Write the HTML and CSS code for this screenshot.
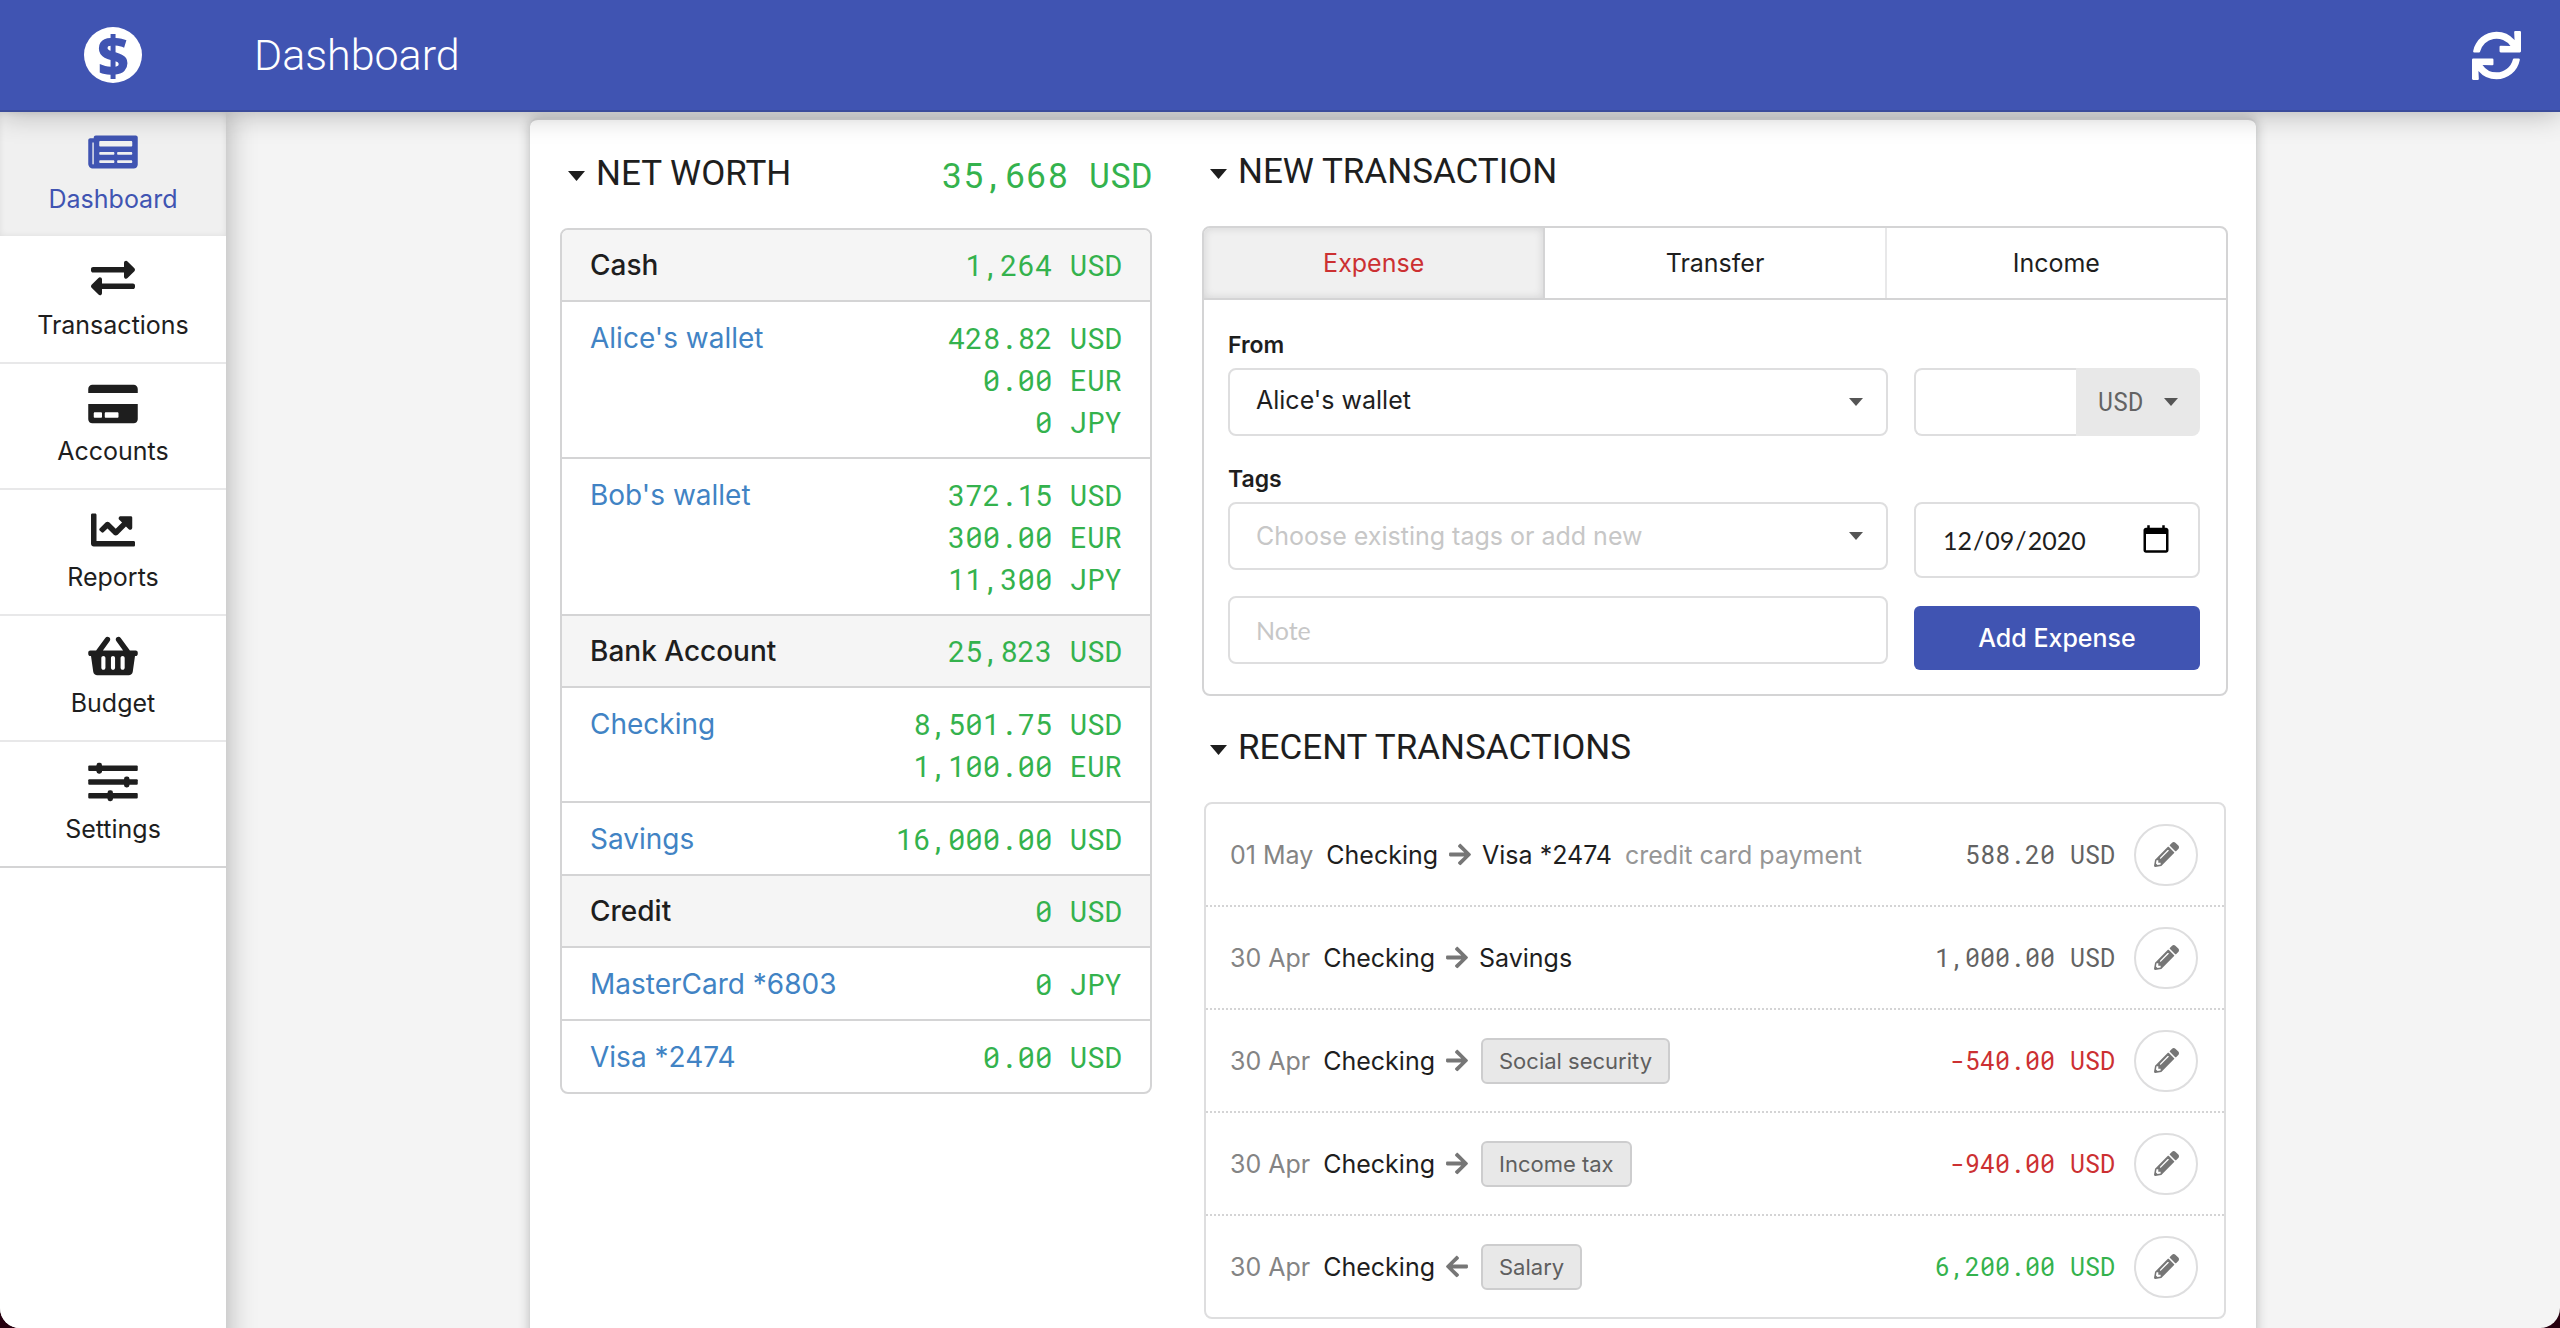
FILE: index.html
```html
<!DOCTYPE html>
<html lang="en">
<head>
<meta charset="utf-8">
<title>Dashboard</title>
<link rel="stylesheet" href="styles.css">
</head>
<body>
<svg class="sprite" aria-hidden="true">
  <symbol id="i-right" viewBox="0 0 448 512"><path d="M190.5 66.9l22.2-22.2c9.4-9.4 24.6-9.4 33.9 0L441 239c9.4 9.4 9.4 24.6 0 33.9L246.6 467.3c-9.4 9.4-24.6 9.4-33.9 0l-22.2-22.2c-9.5-9.5-9.3-25 .4-34.3L311.4 296H24c-13.3 0-24-10.7-24-24v-32c0-13.3 10.7-24 24-24h287.4L190.9 101.2c-9.8-9.3-10-24.8-.4-34.3z"/></symbol>
  <symbol id="i-pencil" viewBox="0 0 512 512"><path d="M497.9 142.1l-46.1 46.1c-4.7 4.7-12.3 4.7-17 0l-111-111c-4.7-4.7-4.7-12.3 0-17l46.1-46.1c18.7-18.7 49.1-18.7 67.9 0l60.1 60.1c18.8 18.7 18.8 49.1 0 67.9zM284.2 99.8L21.6 362.4.4 483.9c-2.9 16.4 11.4 30.6 27.8 27.8l121.5-21.3 262.6-262.6c4.7-4.7 4.7-12.3 0-17l-111-111c-4.8-4.7-12.4-4.7-17.1 0zM124.1 339.9c-5.5-5.5-5.5-14.3 0-19.8l154-154c5.5-5.5 14.3-5.5 19.8 0s5.5 14.3 0 19.8l-154 154c-5.5 5.5-14.3 5.5-19.8 0zM88 424h48v36.3l-64.5 11.3-31.1-31.1L51.7 376H88v48z"/></symbol>
</svg>

<header class="topbar">
  <a class="logo" href="#" aria-label="Home">$</a>
  <h1 class="title">Dashboard</h1>
  <button class="sync" type="button" aria-label="Sync">
    <svg viewBox="0 0 512 512"><path d="M440.65 12.57l4 82.77A247.16 247.16 0 0 0 255.83 8C134.73 8 33.91 94.92 12.29 209.82A12 12 0 0 0 24.09 224h49.05a12 12 0 0 0 11.67-9.26 175.91 175.91 0 0 1 317-56.94l-101.46-4.86a12 12 0 0 0-12.57 12v47.41a12 12 0 0 0 12 12H500a12 12 0 0 0 12-12V12a12 12 0 0 0-12-12h-47.37a12 12 0 0 0-11.98 12.57zM255.83 432a175.61 175.61 0 0 1-146-77.8l101.8 4.87a12 12 0 0 0 12.57-12v-47.4a12 12 0 0 0-12-12H12a12 12 0 0 0-12 12V500a12 12 0 0 0 12 12h47.35a12 12 0 0 0 12-12.6l-4.15-82.57A247.17 247.17 0 0 0 255.83 504c121.11 0 221.93-86.92 243.55-201.82a12 12 0 0 0-11.8-14.18h-49.05a12 12 0 0 0-11.67 9.26A175.86 175.86 0 0 1 255.83 432z"/></svg>
  </button>
</header>

<div class="layout">
  <nav class="sidebar">
    <a class="nav-item active" href="#">
      <svg viewBox="0 0 576 512"><path d="M552 64H88c-13.255 0-24 10.745-24 24v8H24c-13.255 0-24 10.745-24 24v272c0 30.928 25.072 56 56 56h472c26.51 0 48-21.49 48-48V88c0-13.255-10.745-24-24-24zM56 400a8 8 0 0 1-8-8V144h16v248a8 8 0 0 1-8 8zm236-16H140c-6.627 0-12-5.373-12-12v-8c0-6.627 5.373-12 12-12h152c6.627 0 12 5.373 12 12v8c0 6.627-5.373 12-12 12zm208 0H348c-6.627 0-12-5.373-12-12v-8c0-6.627 5.373-12 12-12h152c6.627 0 12 5.373 12 12v8c0 6.627-5.373 12-12 12zm-208-96H140c-6.627 0-12-5.373-12-12v-8c0-6.627 5.373-12 12-12h152c6.627 0 12 5.373 12 12v8c0 6.627-5.373 12-12 12zm208 0H348c-6.627 0-12-5.373-12-12v-8c0-6.627 5.373-12 12-12h152c6.627 0 12 5.373 12 12v8c0 6.627-5.373 12-12 12zm0-96H140c-6.627 0-12-5.373-12-12v-40c0-6.627 5.373-12 12-12h360c6.627 0 12 5.373 12 12v40c0 6.627-5.373 12-12 12z"/></svg>
      Dashboard
    </a>
    <a class="nav-item" href="#">
      <svg viewBox="0 0 512 512"><path d="M0 168v-16c0-13.255 10.745-24 24-24h360V80c0-21.367 25.899-32.042 40.971-16.971l80 80c9.372 9.373 9.372 24.569 0 33.941l-80 80C409.956 271.982 384 261.456 384 240v-48H24c-13.255 0-24-10.745-24-24zm488 152H128v-48c0-21.314-25.862-32.08-40.971-16.971l-80 80c-9.372 9.373-9.372 24.569 0 33.941l80 80C102.057 463.997 128 453.437 128 432v-48h360c13.255 0 24-10.745 24-24v-16c0-13.255-10.745-24-24-24z"/></svg>
      Transactions
    </a>
    <a class="nav-item" href="#">
      <svg viewBox="0 0 576 512"><path d="M0 432c0 26.5 21.5 48 48 48h480c26.5 0 48-21.5 48-48V256H0v176zm192-68c0-6.6 5.4-12 12-12h136c6.6 0 12 5.4 12 12v40c0 6.6-5.4 12-12 12H204c-6.6 0-12-5.4-12-12v-40zm-128 0c0-6.6 5.4-12 12-12h72c6.6 0 12 5.4 12 12v40c0 6.6-5.4 12-12 12H76c-6.6 0-12-5.4-12-12v-40zM576 80v48H0V80c0-26.5 21.5-48 48-48h480c26.5 0 48 21.5 48 48z"/></svg>
      Accounts
    </a>
    <a class="nav-item" href="#">
      <svg viewBox="0 0 512 512"><path d="M496 384H64V80c0-8.84-7.16-16-16-16H16C7.16 64 0 71.16 0 80v336c0 17.67 14.33 32 32 32h464c8.84 0 16-7.16 16-16v-32c0-8.84-7.16-16-16-16zM464 96H345.94c-21.38 0-32.09 25.85-16.97 40.97l32.4 32.4L288 242.75l-73.37-73.37c-12.5-12.5-32.76-12.5-45.25 0l-68.69 68.69c-6.25 6.25-6.25 16.38 0 22.63l22.62 22.62c6.25 6.25 16.38 6.25 22.63 0L192 237.25l73.37 73.37c12.5 12.5 32.76 12.5 45.25 0l96-96 32.4 32.4c15.12 15.12 40.97 4.41 40.97-16.97V112c.01-8.84-7.15-16-15.99-16z"/></svg>
      Reports
    </a>
    <a class="nav-item" href="#">
      <svg viewBox="0 0 576 512"><path d="M576 216v16c0 13.255-10.745 24-24 24h-8l-26.113 182.788C514.509 462.435 494.257 480 470.37 480H105.63c-23.887 0-44.139-17.565-47.518-41.212L32 256h-8c-13.255 0-24-10.745-24-24v-16c0-13.255 10.745-24 24-24h67.341l106.78-146.821c10.395-14.292 30.407-17.453 44.701-7.058 14.293 10.395 17.453 30.408 7.058 44.701L170.477 192h235.046L326.12 82.821c-10.395-14.292-7.234-34.306 7.059-44.701 14.291-10.395 34.306-7.235 44.701 7.058L484.659 192H552c13.255 0 24 10.745 24 24zM312 392V280c0-13.255-10.745-24-24-24s-24 10.745-24 24v112c0 13.255 10.745 24 24 24s24-10.745 24-24zm112 0V280c0-13.255-10.745-24-24-24s-24 10.745-24 24v112c0 13.255 10.745 24 24 24s24-10.745 24-24zm-224 0V280c0-13.255-10.745-24-24-24s-24 10.745-24 24v112c0 13.255 10.745 24 24 24s24-10.745 24-24z"/></svg>
      Budget
    </a>
    <a class="nav-item last" href="#">
      <svg viewBox="0 0 576 512"><rect y="64" width="576" height="64" rx="12"/><rect y="224" width="576" height="64" rx="12"/><rect y="384" width="576" height="64" rx="12"/><rect x="96" y="32" width="64" height="128" rx="28"/><rect x="416" y="192" width="64" height="128" rx="28"/><rect x="224" y="352" width="64" height="128" rx="28"/></svg>
      Settings
    </a>
  </nav>

  <main class="content">
    <div class="card">
      <section class="networth">
        <h2 class="heading"><span class="caret big"></span>NET WORTH<span class="money total">35,668 USD</span></h2>
        <ul class="accounts">
          <li class="group"><span>Cash</span><span class="money">1,264 USD</span></li>
          <li><a href="#">Alice's wallet</a><span class="money">428.82 USD<br>0.00 EUR<br>0 JPY</span></li>
          <li><a href="#">Bob's wallet</a><span class="money">372.15 USD<br>300.00 EUR<br>11,300 JPY</span></li>
          <li class="group"><span>Bank Account</span><span class="money">25,823 USD</span></li>
          <li><a href="#">Checking</a><span class="money">8,501.75 USD<br>1,100.00 EUR</span></li>
          <li><a href="#">Savings</a><span class="money">16,000.00 USD</span></li>
          <li class="group"><span>Credit</span><span class="money">0 USD</span></li>
          <li><a href="#">MasterCard *6803</a><span class="money">0 JPY</span></li>
          <li><a href="#">Visa *2474</a><span class="money">0.00 USD</span></li>
        </ul>
      </section>

      <div class="side">
        <section>
          <h2 class="heading"><span class="caret big"></span>NEW TRANSACTION</h2>
          <form class="form">
            <div class="tabs">
              <button class="tab active" type="button">Expense</button>
              <button class="tab" type="button">Transfer</button>
              <button class="tab" type="button">Income</button>
            </div>
            <div class="fields">
              <div class="field">
                <label for="from">From</label>
                <div class="picker">
                  <select id="from" class="control account"><option>Alice's wallet</option></select>
                  <span class="caret"></span>
                </div>
              </div>
              <div class="amount">
                <input class="control" type="text" aria-label="Amount">
                <div class="picker">
                  <select class="currency" aria-label="Currency"><option>USD</option></select>
                  <span class="caret"></span>
                </div>
              </div>
              <div class="field">
                <label for="tags">Tags</label>
                <div class="picker">
                  <input id="tags" class="control" type="text" placeholder="Choose existing tags or add new">
                  <span class="caret"></span>
                </div>
                <input class="control note" type="text" placeholder="Note" aria-label="Note">
              </div>
              <div class="actions">
                <input class="control date" type="date" value="2020-12-09" aria-label="Date">
                <button class="submit" type="submit">Add Expense</button>
              </div>
            </div>
          </form>
        </section>

        <section>
          <h2 class="heading recent"><span class="caret big"></span>RECENT TRANSACTIONS</h2>
          <ul class="transactions">
            <li>
              <time>01 May</time><span>Checking</span><svg class="arrow"><use href="#i-right"/></svg><span>Visa *2474</span><span class="memo">credit card payment</span>
              <span class="money neutral">588.20 USD</span>
              <button class="edit" type="button" aria-label="Edit"><svg><use href="#i-pencil"/></svg></button>
            </li>
            <li>
              <time>30 Apr</time><span>Checking</span><svg class="arrow"><use href="#i-right"/></svg><span>Savings</span>
              <span class="money neutral">1,000.00 USD</span>
              <button class="edit" type="button" aria-label="Edit"><svg><use href="#i-pencil"/></svg></button>
            </li>
            <li>
              <time>30 Apr</time><span>Checking</span><svg class="arrow"><use href="#i-right"/></svg><span class="tag">Social security</span>
              <span class="money negative">-540.00 USD</span>
              <button class="edit" type="button" aria-label="Edit"><svg><use href="#i-pencil"/></svg></button>
            </li>
            <li>
              <time>30 Apr</time><span>Checking</span><svg class="arrow"><use href="#i-right"/></svg><span class="tag">Income tax</span>
              <span class="money negative">-940.00 USD</span>
              <button class="edit" type="button" aria-label="Edit"><svg><use href="#i-pencil"/></svg></button>
            </li>
            <li>
              <time>30 Apr</time><span>Checking</span><svg class="arrow back"><use href="#i-right"/></svg><span class="tag">Salary</span>
              <span class="money">6,200.00 USD</span>
              <button class="edit" type="button" aria-label="Edit"><svg><use href="#i-pencil"/></svg></button>
            </li>
          </ul>
        </section>
      </div>
    </div>
  </main>
</div>
</body>
</html>
```
FILE: styles.css
```css
* { box-sizing: border-box; }

html { overflow: hidden; background: #26000f; }

body {
  margin: 0;
  height: 100vh;
  overflow: hidden;
  display: flex;
  flex-direction: column;
  border-radius: 0 0 20px 20px;
  background: #f4f4f4;
  color: #1e1e1e;
  font: 25px/34px Inter, "Liberation Sans", sans-serif;
}

a { color: #4183c4; text-decoration: none; }
h1, h2, ul { margin: 0; padding: 0; font-weight: 400; list-style: none; }
button, input, select { margin: 0; font: inherit; color: inherit; }
button { padding: 0; border: 0; background: none; cursor: pointer; }
svg { fill: currentColor; }
.sprite { display: none; }

/* Top bar */
.topbar {
  position: relative;
  z-index: 2;
  flex: none;
  display: flex;
  align-items: center;
  height: 112px;
  padding: 0 39px 0 84px;
  background: #4054b2;
  border-bottom: 2px solid #3b4c9b;
  color: #fff;
  box-shadow: 0 0 28px rgba(0, 0, 0, .3);
}
.logo {
  display: flex;
  align-items: center;
  justify-content: center;
  width: 58px;
  height: 56px;
  border-radius: 50%;
  background: #fff;
  color: #4054b2;
  font: 800 54px/56px "Open Sans", sans-serif;
}
.title {
  margin-left: 112px;
  font: 300 43px/56px Roboto, sans-serif;
}
.sync { margin-left: auto; height: 49px; }
.sync svg { display: block; width: 49px; height: 49px; }

.layout { flex: 1; display: flex; min-height: 0; }

/* Sidebar */
.sidebar {
  flex: none;
  width: 226px;
  margin-bottom: -30px;
  background: #fff;
  box-shadow: 0 0 28px rgba(0, 0, 0, .3);
}
.nav-item {
  display: flex;
  flex-direction: column;
  align-items: center;
  gap: 8px;
  padding: 18px 0 20px;
  border-bottom: 2px solid #e8e8e9;
  color: #1e1e1e;
}
.nav-item svg { width: 50px; height: 44px; }
.nav-item.active {
  background: #f0f0f0 padding-box;
  border-color: #fff;
  color: #4054b2;
  box-shadow: inset 0 0 6px rgba(0, 0, 0, .08);
}
.nav-item.last { border-color: #d4d4d5; }

/* Main card */
.content { flex: 1; display: flex; justify-content: center; padding-top: 6px; }
.card {
  display: flex;
  gap: 50px;
  width: 100%;
  max-width: 1726px;
  margin-bottom: -30px;
  padding: 24px 28px 28px 30px;
  background: #fff;
  border: solid #d4d4d5;
  border-width: 2px 0 0;
  border-radius: 8px;
  box-shadow: 0 0 12px rgba(34, 36, 38, .3);
}
.networth { flex: 592; padding-top: 2px; }
.side { flex: 1026; }

.heading {
  display: flex;
  align-items: center;
  padding: 8px 0 34px 8px;
  font: 35px/40px Roboto, sans-serif;
}
.heading.recent { padding-top: 32px; }

.caret {
  width: 14px;
  height: 8px;
  background: #555;
  clip-path: polygon(0 0, 100% 0, 50% 100%);
}
.caret.big {
  width: 17px;
  height: 10px;
  margin: 4px 11px 0 0;
  background: #1e1e1e;
}

.money {
  font-family: "Roboto Mono", "DejaVu Sans Mono", monospace;
  color: #34b24d;
  text-align: right;
}
.total { margin-left: auto; }
.neutral { color: #636363; }
.negative { color: #cc3032; }

/* Account list */
.accounts {
  border: 2px solid #d4d4d5;
  border-radius: 8px;
  font-size: 28px;
  line-height: 42px;
}
.accounts li {
  display: flex;
  justify-content: space-between;
  padding: 15px 28px 14px;
  border-bottom: 2px solid #d4d4d5;
}
.accounts li:last-child { border-bottom: 0; }
.accounts .group { padding-top: 14px; background: #f5f5f5; font-weight: 500; }
.accounts .group:first-child { border-radius: 6px 6px 0 0; }
.accounts .group .money { font-weight: 400; }
.accounts .money { font-size: 29px; }

/* New transaction form */
.form { border: 2px solid #d4d4d5; border-radius: 8px; overflow: hidden; }
.tabs { display: flex; border-bottom: 2px solid #d4d4d5; }
.tab { flex: 1; height: 70px; border-right: 2px solid #e8e8e9; }
.tab:last-child { border-right: 0; }
.tab.active {
  background: #f0f0f0;
  border-color: #d4d4d5;
  color: #cc3032;
  box-shadow: inset 0 0 8px rgba(34, 36, 38, .15);
}
.fields {
  display: grid;
  grid-template-columns: 1fr 286px;
  gap: 26px;
  padding: 28px 26px 24px 24px;
}
.field { display: flex; flex-direction: column; }
.field label {
  margin-bottom: 6px;
  font-size: 23px;
  font-weight: 600;
}
.picker { display: grid; align-items: center; }
.picker > * { grid-area: 1 / 1; }
.picker .caret { justify-self: end; margin-right: 25px; pointer-events: none; }
.control {
  width: 100%;
  height: 68px;
  padding: 0 26px;
  border: 2px solid #dededf;
  border-radius: 8px;
  background: #fff;
  appearance: none;
  outline: 0;
}
.control::placeholder { color: #c7c7c7; opacity: 1; }
.account { padding-bottom: 4px; }
.note { margin-top: 26px; font-family: Lato, sans-serif; }
.amount { display: flex; align-self: end; }
.amount > .control { flex: 1; min-width: 0; border-right: 0; border-radius: 8px 0 0 8px; }
.amount .caret { margin-right: 22px; }
.currency {
  width: 124px;
  height: 68px;
  padding: 0 22px;
  border: 0;
  border-radius: 0 8px 8px 0;
  background: #e8e8e8;
  color: #636363;
  font-family: "Roboto Mono", "DejaVu Sans Mono", monospace;
  appearance: none;
}
.actions { display: flex; flex-direction: column; gap: 28px; padding-top: 40px; }
.date { height: 76px; font-family: Lato, sans-serif; }
.date::-webkit-calendar-picker-indicator { width: 32px; height: 32px; padding: 0; }
.submit {
  height: 64px;
  border-radius: 6px;
  background: #4054b2;
  color: #fff;
  font-weight: 500;
}

/* Recent transactions */
.transactions { margin: 0 2px; border: 2px solid #dededf; border-radius: 8px; }
.transactions li {
  display: flex;
  align-items: center;
  gap: 13px;
  min-height: 103px;
  padding: 0 26px 0 24px;
  border-bottom: 2px dotted #d4d4d5;
}
.transactions li:last-child { min-height: 101px; border-bottom: 0; }
.transactions .money { margin-left: auto; }
time { color: #848484; }
.memo { color: #969696; }
.arrow { width: 22px; height: 25px; margin: 0 -2px; color: #767676; }
.back { transform: scaleX(-1); }
.tag {
  margin-left: 2px;
  padding: 4px 16px;
  border: 2px solid #cdcdce;
  border-radius: 6px;
  background: #e8e8e8;
  color: #5f5f5f;
  font-size: 22px;
}
.edit {
  display: flex;
  align-items: center;
  justify-content: center;
  width: 64px;
  height: 62px;
  margin-left: 6px;
  border: 2px solid #dededf;
  border-radius: 32px;
  color: #767676;
}
.edit svg { width: 25px; height: 25px; }
```
